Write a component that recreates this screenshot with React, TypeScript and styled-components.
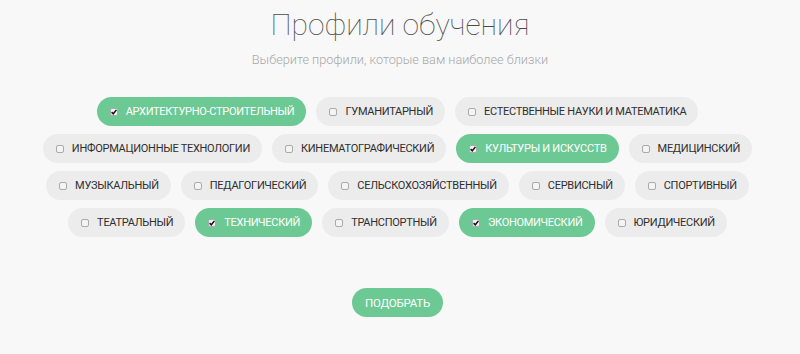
import styled, { createGlobalStyle } from 'styled-components'

const profiles = [
	{ name: 'Архитектурно-строительный', on: true },
	{ name: 'Гуманитарный', on: false },
	{ name: 'Естественные науки и математика', on: false },
	{ name: 'Информационные технологии', on: false },
	{ name: 'Кинематографический', on: false },
	{ name: 'Культуры и искусств', on: true },
	{ name: 'Медицинский', on: false },
	{ name: 'Музыкальный', on: false },
	{ name: 'Педагогический', on: false },
	{ name: 'Сельскохозяйственный', on: false },
	{ name: 'Сервисный', on: false },
	{ name: 'Спортивный', on: false },
	{ name: 'Театральный', on: false },
	{ name: 'Технический', on: true },
	{ name: 'Транспортный', on: false },
	{ name: 'Экономический', on: true },
	{ name: 'Юридический', on: false },
]

function App() {
	return (
		<>
			<Global />
			<Page>
				<Title>Профили обучения</Title>
				<Subtitle>Выберите профили, которые вам наиболее близки</Subtitle>
				<Pills>
					{profiles.map(p => (
						<Pill key={p.name} $on={p.on}>
							<Box>
								{p.on && (
									<svg width="6" height="6" viewBox="0 0 6 6">
										<path d="M0.6 3.1 L2.3 4.8 L5.4 0.9" fill="none" stroke="#111" strokeWidth="1.5" />
									</svg>
								)}
							</Box>
							{p.name}
						</Pill>
					))}
				</Pills>
				<Submit>Подобрать</Submit>
			</Page>
		</>
	)
}

const Global = createGlobalStyle`
	html, body {
		margin: 0;
		padding: 0;
		background: #f8f8f8;
	}
	body {
		font-family: Roboto, 'Liberation Sans', sans-serif;
	}
`

const Page = styled.div`
	width: 800px;
	height: 354px;
	display: flex;
	flex-direction: column;
	align-items: center;
	padding-top: 7px;
	box-sizing: border-box;
`

const Title = styled.h1`
	margin: 0;
	font-size: 30px;
	font-weight: 100;
	color: #4a4a4a;
	line-height: 36px;
`

const Subtitle = styled.p`
	margin: 9px 0 0;
	font-size: 12.7px;
	font-weight: 300;
	color: #a8a8a8;
	line-height: 16px;
`

const Pills = styled.div`
	margin-top: 29px;
	margin-left: -5px;
	width: 712px;
	display: flex;
	flex-wrap: wrap;
	justify-content: center;
	gap: 8px 10px;
`

const Pill = styled.label<{ $on: boolean }>`
	display: inline-flex;
	align-items: center;
	gap: 8px;
	height: 29px;
	padding: 0 12px 0 13px;
	border-radius: 15px;
	font-size: 11px;
	letter-spacing: -0.28px;
	text-transform: uppercase;
	white-space: nowrap;
	background: ${p => (p.$on ? '#6cc993' : '#ececec')};
	color: ${p => (p.$on ? '#fff' : '#2f2f2f')};
`

const Box = styled.span`
	width: 6px;
	height: 6px;
	border: 1px solid #aaa;
	border-radius: 2px;
	background: #f4f4f4;
	display: inline-flex;
	align-items: center;
	justify-content: center;
	box-sizing: content-box;
	flex-shrink: 0;
`

const Submit = styled.button`
	margin-top: 51px;
	margin-left: -5px;
	height: 29px;
	padding: 0 13px;
	border: none;
	border-radius: 15px;
	background: #6cc993;
	color: #fff;
	font-family: Roboto, 'Liberation Sans', sans-serif;
	font-size: 11.5px;
	letter-spacing: -0.2px;
	text-transform: uppercase;
`

export default App
